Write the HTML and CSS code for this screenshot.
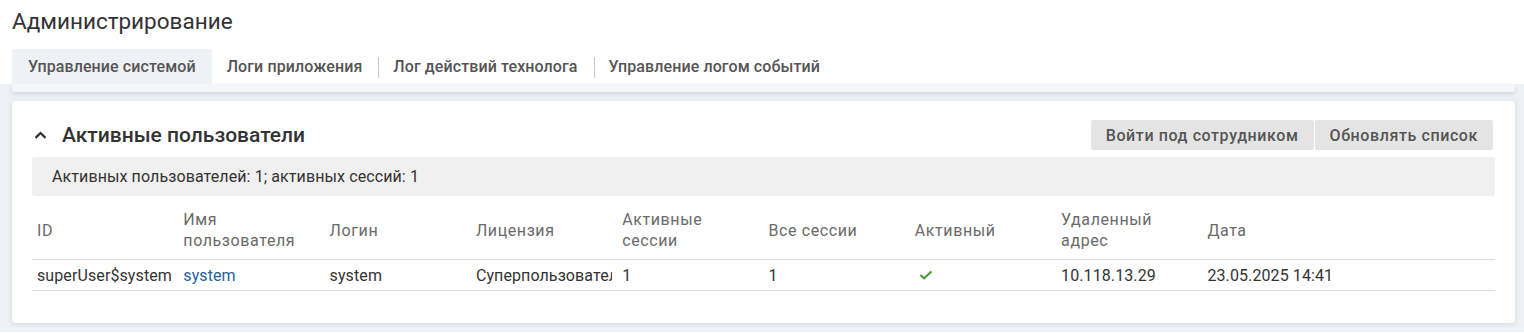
FILE: index.html
```html
<!doctype html>
<html lang="ru">
<head>
  <meta charset="UTF-8" />
  <meta name="viewport" content="width=device-width, initial-scale=1.0" />
  <title>Администрирование</title>
  <link rel="stylesheet" href="styles.css">
</head>
<body>
  <!-- Page header -->
  <header class="page-header">
    <h1 class="page-title">Администрирование</h1>
    <ul class="tab-list">
      <li class="tab-item active">Управление системой</li>
      <li class="tab-item">Логи приложения</li>
      <li class="tab-item">Лог действий технолога</li>
      <li class="tab-item">Управление логом событий</li>
    </ul>
  </header>

  <!-- Content -->
  <main class="content">
    <div class="tab-strip"></div>

    <section class="card">
      <div class="card-header">
        <div class="card-title">
          <svg class="chevron" width="13" height="8" viewBox="0 0 13 8" aria-hidden="true">
            <path d="M1.5 6.8 L6.5 2 L11.5 6.8" fill="none" stroke="#333" stroke-width="2.3" />
          </svg>
          <h2>Активные пользователи</h2>
        </div>
        <div class="btn-group">
          <button class="btn">Войти под сотрудником</button>
          <button class="btn">Обновлять список</button>
        </div>
      </div>

      <div class="summary">Активных пользователей: 1; активных сессий: 1</div>

      <table class="users-table">
        <colgroup>
          <col><col><col><col><col><col><col><col><col class="wide">
        </colgroup>
        <thead>
          <tr>
            <th>ID</th>
            <th>Имя<br>пользователя</th>
            <th>Логин</th>
            <th>Лицензия</th>
            <th>Активные<br>сессии</th>
            <th>Все сессии</th>
            <th>Активный</th>
            <th>Удаленный<br>адрес</th>
            <th>Дата</th>
          </tr>
        </thead>
        <tbody>
          <tr>
            <td>superUser$system</td>
            <td><a href="#" class="user-link">system</a></td>
            <td>system</td>
            <td><span class="cell-clip" title="Суперпользователь">Суперпользователь</span></td>
            <td>1</td>
            <td>1</td>
            <td>
              <svg class="check" width="14" height="10" viewBox="0 0 14 10" aria-hidden="true">
                <path d="M1.5 5 L5 8.3 L12.5 1.5" fill="none" stroke="#4e9a3a" stroke-width="2.2" />
              </svg>
            </td>
            <td>10.118.13.29</td>
            <td>23.05.2025 14:41</td>
          </tr>
        </tbody>
      </table>
    </section>
  </main>
</body>
</html>
```

FILE: styles.css
```css
/* ------------------ Reset & Globals ------------------ */
* {
  margin: 0;
  padding: 0;
  box-sizing: border-box;
}
body {
  font-family: Roboto, 'Liberation Sans', sans-serif;
  background: #fff;
  color: #333;
  font-size: 16px;
}
a {
  text-decoration: none;
  color: inherit;
}

/* ------------------ Header & Tabs ------------------ */
.page-header {
  padding: 8px 12px 0;
}
.page-title {
  font-size: 22.5px;
  font-weight: 400;
  line-height: 26px;
  color: #333;
}
.tab-list {
  list-style: none;
  display: flex;
  margin-top: 15px;
  height: 35px;
}
.tab-item {
  display: flex;
  align-items: center;
  padding: 0 16px 0 15px;
  font-weight: 500;
  letter-spacing: 0.1px;
  color: #555;
  position: relative;
}
.tab-item.active {
  background: #eef1f6;
  border-radius: 3px 3px 0 0;
  padding: 0 16px;
}
.tab-item + .tab-item:not(.active)::before {
  content: "";
  position: absolute;
  left: 0;
  top: 8px;
  bottom: 6px;
  width: 1px;
  background: #c8c8c8;
}
.tab-item.active + .tab-item::before {
  display: none;
}

/* ------------------ Content ------------------ */
.content {
  background: #edf0f4;
  padding: 0 9px 9px 12px;
}
.tab-strip {
  height: 8px;
  background: #f4f6fa;
  border-radius: 0 0 3px 3px;
  box-shadow: 0 2px 4px rgba(160, 170, 190, 0.35);
  margin-bottom: 9px;
}
.card {
  background: #fff;
  border-radius: 4px;
  box-shadow: 0 1px 4px rgba(160, 170, 190, 0.35);
  padding: 19px 20px 32px;
}
.card-header {
  display: flex;
  justify-content: space-between;
  align-items: center;
  height: 30px;
}
.card-title {
  display: flex;
  align-items: center;
  gap: 15px;
  padding-left: 2px;
}
.card-title h2 {
  font-size: 21px;
  font-weight: 500;
  color: #333;
}
.chevron {
  display: block;
}
.btn-group {
  display: flex;
  gap: 1px;
  margin-right: 2px;
}
.btn {
  font-family: inherit;
  font-size: 16px;
  font-weight: 500;
  letter-spacing: 0.6px;
  color: #555;
  background: #e4e4e4;
  border: none;
  border-radius: 2px;
  height: 30px;
  padding: 0 15px;
  cursor: pointer;
}
.summary {
  margin-top: 7px;
  background: #f0f0f0;
  border-radius: 3px;
  height: 39px;
  line-height: 39px;
  padding-left: 20px;
  letter-spacing: 0.1px;
  color: #333;
}

/* ------------------ Table ------------------ */
.users-table {
  width: 100%;
  border-collapse: collapse;
  table-layout: fixed;
}
.users-table col {
  width: 10%;
}
.users-table col.wide {
  width: 20%;
}
.users-table th {
  text-align: left;
  font-weight: 400;
  color: #6a6a6a;
  line-height: 21px;
  padding: 13px 5px 8px;
  border-bottom: 1px solid #dcdcdc;
  letter-spacing: 0.6px;
}
.users-table td {
  padding: 0 5px;
  height: 31px;
  border-bottom: 1px solid #dcdcdc;
  white-space: nowrap;
  overflow: hidden;
  letter-spacing: 0.1px;
  color: #333;
}
.cell-clip {
  display: block;
  overflow: hidden;
}
.user-link {
  color: #1f5f9e;
}
.check {
  display: block;
  margin-left: 4px;
}
```
